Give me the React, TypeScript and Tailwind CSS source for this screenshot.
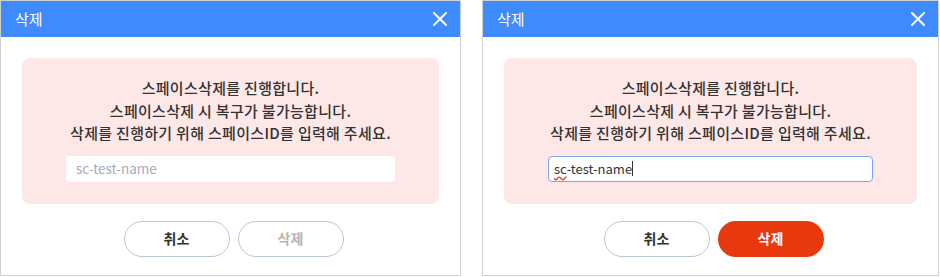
import React from "react";

const font = { fontFamily: '"Noto Sans CJK KR", "Noto Sans", sans-serif' };

function CloseIcon() {
  return (
    <svg width="14" height="14" viewBox="0 0 14 14" className="shrink-0">
      <path d="M1 1 L13 13 M13 1 L1 13" stroke="white" strokeWidth="2" strokeLinecap="square" />
    </svg>
  );
}

interface DialogProps {
  width: string;
  filled: boolean;
}

function DeleteDialog({ width, filled }: DialogProps) {
  return (
    <div className={`${width} h-[276px] border border-[#cfcfcf] bg-white flex flex-col`}>
      <div className="h-[36px] bg-[#3d8bfd] flex items-center justify-between pl-[14px] pr-[13px]">
        <span className="text-white text-[15px]">삭제</span>
        <CloseIcon />
      </div>

      <div className="px-[21px] pt-[21px]">
        <div className="bg-[#fde7e7] rounded-[8px] pt-[19px] pb-[22px] flex flex-col items-center">
          <p className="text-[15px] tracking-[0.3px] leading-[22.5px] text-[#333] text-center font-medium">
            스페이스삭제를 진행합니다.
            <br />
            스페이스삭제 시 복구가 불가능합니다.
            <br />
            삭제를 진행하기 위해 스페이스ID를 입력해 주세요.
          </p>
          <div className="self-stretch px-[44px] mt-[11px]">
            {filled ? (
              <div className="h-[26px] bg-white rounded-[4px] border border-[#7aa7f0] flex items-center px-[5px] text-[13px] text-[#333]">
                <span className="underline decoration-wavy decoration-[#e53935] underline-offset-[2px]">sc</span>
                <span>-test-name</span>
                <span className="w-px h-[15px] bg-[#333]" />
              </div>
            ) : (
              <div className="h-[26px] bg-white rounded-[4px] flex items-center px-[10px] text-[13.5px] text-[#a3abbc]">
                sc-test-name
              </div>
            )}
          </div>
        </div>
      </div>

      <div className="flex justify-center gap-[8px] mt-[17px] pl-[6px]">
        <button className="w-[106px] h-[36px] rounded-full border border-[#b9c6dc] bg-white text-[14px] font-bold text-[#333]">
          취소
        </button>
        {filled ? (
          <button className="w-[106px] h-[36px] rounded-full bg-[#e8380d] text-[14px] font-bold text-white">
            삭제
          </button>
        ) : (
          <button className="w-[106px] h-[36px] rounded-full border border-[#b9c6dc] bg-white text-[14px] font-bold text-[#b5b5b5]">
            삭제
          </button>
        )}
      </div>
    </div>
  );
}

export default function App() {
  return (
    <div className="w-[940px] h-[277px] bg-white flex gap-[21px]" style={font}>
      <DeleteDialog width="w-[461px]" filled={false} />
      <DeleteDialog width="w-[457px]" filled={true} />
    </div>
  );
}
